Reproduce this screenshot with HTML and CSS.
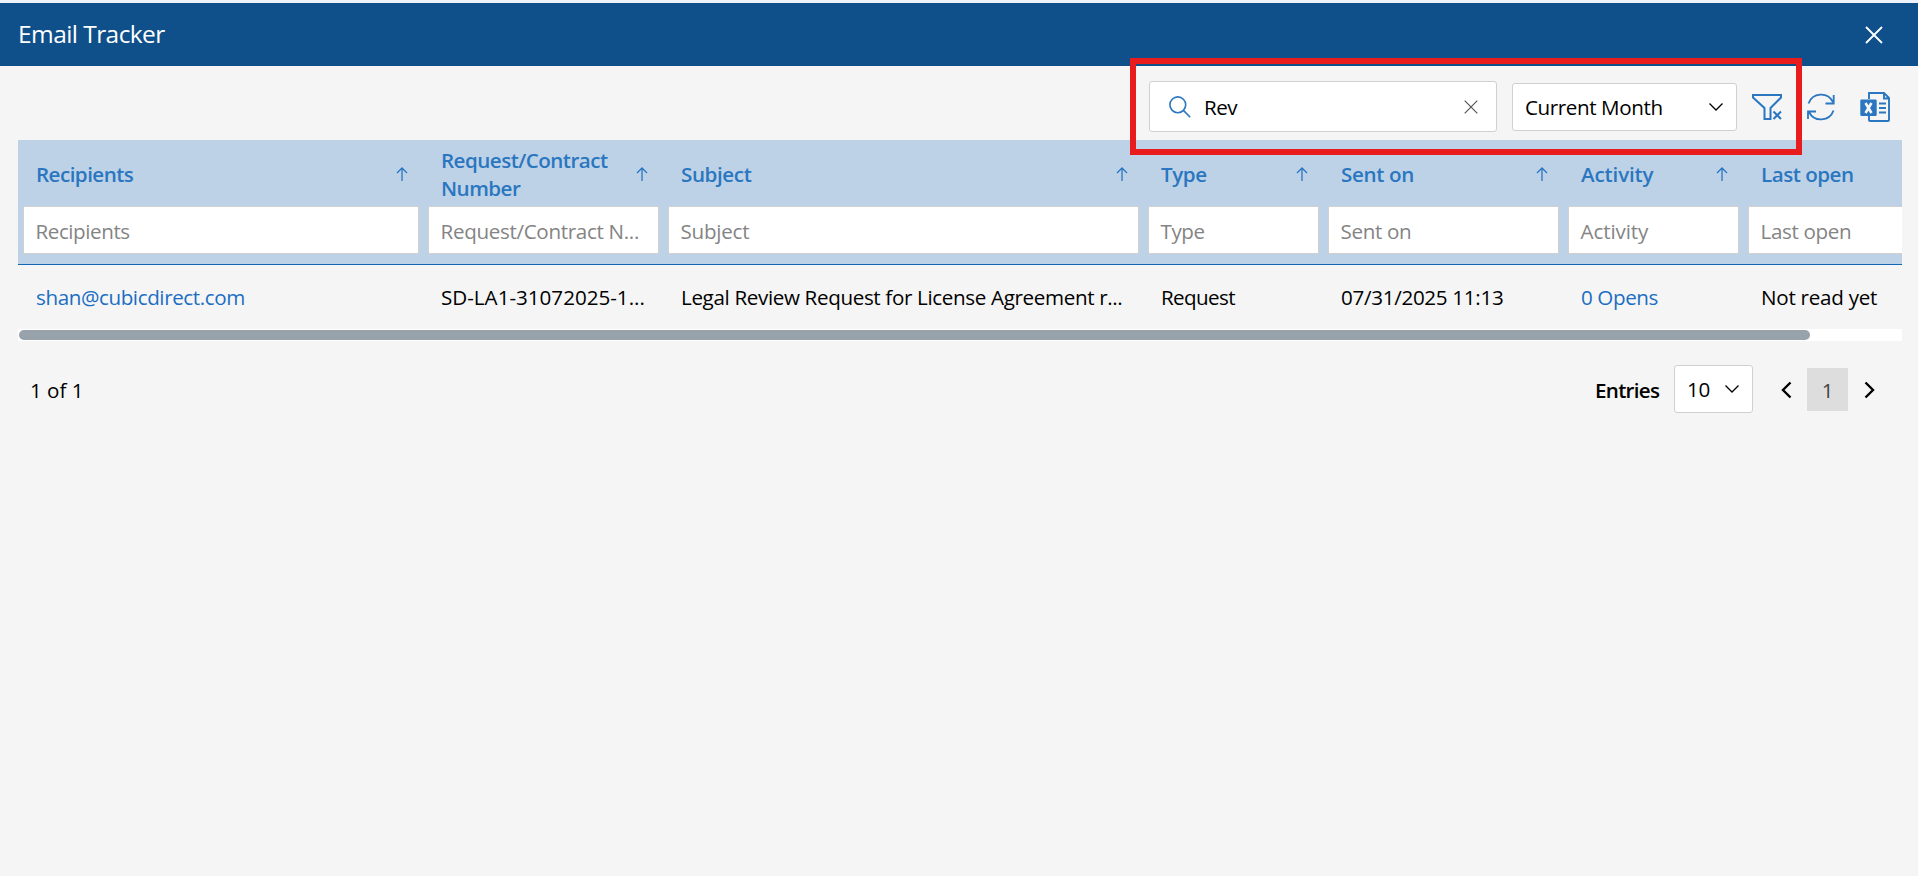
FILE: index.html
```html
<!DOCTYPE html>
<html lang="en">
<head>
<meta charset="utf-8">
<title>Email Tracker</title>
<link rel="stylesheet" href="styles.css">
</head>
<body>
<svg width="0" height="0" class="defs">
  <symbol id="arrow-up" viewBox="0 0 12 14"><path d="M6 14V1M1 6l5-5 5 5"/></symbol>
  <symbol id="chevron" viewBox="0 0 16 10"><path d="M1.500 1.500 8 8l6.500-6.500"/></symbol>
</svg>
<header class="titlebar">
  <h1 class="title">Email Tracker</h1>
  <svg class="close" viewBox="0 0 18 18"><path d="M1 1l16 16M17 1 1 17"/></svg>
</header>
<main class="panel">
  <div class="toolbar">
    <div class="search">
      <svg class="search-icon" viewBox="0 0 22 22"><circle cx="8.800" cy="8.800" r="7.900"/><path d="M14.400 14.400l6.800 6.800"/></svg>
      <span class="search-text">Rev</span>
      <svg class="clear" viewBox="0 0 14 14"><path d="M.7.7l12.600 12.600M13.300.7.7 13.300"/></svg>
    </div>
    <div class="period">
      <span class="period-text">Current Month</span>
      <svg class="chevron"><use href="#chevron"/></svg>
    </div>
    <svg class="tool filter" viewBox="0 0 30 28"><path d="M1 2h28v2.500L18.500 15v11h-6V15L1 4.500z"/><path d="M21.500 18.500l7.500 7.500M29 18.500 21.500 26"/></svg>
    <svg class="tool refresh" viewBox="0 0 28 28"><path d="M1.500 10.500A13.300 13.300 0 0 1 26 9M26.700 2v8.500H18.500M26.500 17.500A13.300 13.300 0 0 1 2 19M1 26v-7.500h8"/></svg>
    <svg class="tool excel" viewBox="0 0 30 30"><path d="M9 7V1h15l5 5v22q0 1-1 1H10q-1 0-1-1v-4M24 1v5.500h5M19 11.500h7M19 16h7M19 20.500h7"/><path class="solid" d="M1.500 7.500h14a1.200 1.200 0 0 1 1.200 1.200v14a1.200 1.200 0 0 1-1.200 1.200h-14a1.200 1.200 0 0 1-1.200-1.200v-14a1.200 1.200 0 0 1 1.200-1.200z"/><path class="mark" d="M5.500 11l6 10M11.500 11l-6 10"/></svg>
    <div class="highlight"></div>
  </div>

  <section class="grid">
    <div class="row head">
      <div class="th"><span class="h-recipients">Recipients</span><svg class="sort"><use href="#arrow-up"/></svg></div>
      <div class="th"><span class="h-number">Request/Contract<br>Number</span><svg class="sort"><use href="#arrow-up"/></svg></div>
      <div class="th"><span class="h-subject">Subject</span><svg class="sort"><use href="#arrow-up"/></svg></div>
      <div class="th"><span class="h-type">Type</span><svg class="sort"><use href="#arrow-up"/></svg></div>
      <div class="th"><span class="h-sent">Sent on</span><svg class="sort"><use href="#arrow-up"/></svg></div>
      <div class="th"><span class="h-activity">Activity</span><svg class="sort"><use href="#arrow-up"/></svg></div>
      <div class="th"><span class="h-last">Last open</span></div>
    </div>
    <div class="row filters">
      <div class="field"><span class="f-recipients">Recipients</span></div>
      <div class="field"><span class="f-number">Request/Contract N...</span></div>
      <div class="field"><span class="f-subject">Subject</span></div>
      <div class="field"><span class="f-type">Type</span></div>
      <div class="field"><span class="f-sent">Sent on</span></div>
      <div class="field"><span class="f-activity">Activity</span></div>
      <div class="field"><span class="f-last">Last open</span></div>
    </div>
    <div class="row record">
      <div class="td link"><span class="c-mail">shan@cubicdirect.com</span></div>
      <div class="td"><span class="c-number">SD-LA1-31072025-1...</span></div>
      <div class="td"><span class="c-subject">Legal Review Request for License Agreement r...</span></div>
      <div class="td"><span class="c-type">Request</span></div>
      <div class="td"><span class="c-sent">07/31/2025 11:13</span></div>
      <div class="td link"><span class="c-opens">0 Opens</span></div>
      <div class="td"><span class="c-last">Not read yet</span></div>
    </div>
    <div class="scrollbar"><div class="thumb"></div></div>
  </section>

  <footer class="pager">
    <span class="count">1 of 1</span>
    <span class="entries">Entries</span>
    <div class="size"><span class="size-text">10</span><svg class="chevron"><use href="#chevron"/></svg></div>
    <svg class="page-arrow" viewBox="0 0 11 18"><path d="M9.500 1.500 2 9l7.500 7.500"/></svg>
    <span class="page">1</span>
    <svg class="page-arrow" viewBox="0 0 11 18"><path d="M1.500 1.500 9 9l-7.500 7.500"/></svg>
  </footer>
</main>
</body>
</html>
```
FILE: styles.css
```css
* { box-sizing: border-box; }
body {
  margin: 0;
  height: 876px;
  overflow: hidden;
  background: #f5f5f5;
  color: #000;
  font: 20.600px/28px "Open Sans", "Noto Sans", sans-serif;
  letter-spacing: -.4px;
  white-space: nowrap;
}
.defs { position: absolute; }
svg { display: block; flex: none; fill: none; stroke: currentColor; }

.titlebar {
  height: 66px;
  padding: 0 35px 0 18px;
  border-top: 3px solid #eef2fa;
  background: #0f4f8a;
  color: #fff;
  display: flex;
  align-items: center;
  justify-content: space-between;
}
.title { margin: 0; padding-bottom: 2px; font-size: 24.500px; font-weight: 400; letter-spacing: -.57px; }
.close { width: 18px; height: 18px; stroke-width: 1.800; }

.panel { padding: 0 16px 0 18px; }

.toolbar {
  position: relative;
  height: 74px;
  padding: 15px 12px 0 0;
  display: flex;
  justify-content: flex-end;
  align-items: flex-start;
}
.search, .period, .size {
  background: #fff;
  border: 1px solid #d2d0ce;
  border-radius: 3px;
  display: flex;
  align-items: center;
}
.search { width: 348px; height: 51px; padding: 0 18px 0 19px; margin-right: 15px; }
.search-icon { width: 22px; height: 22px; color: #2a76c0; stroke-width: 1.600; margin-right: 13px; }
.search-text { flex: 1; letter-spacing: -.5px; }
.clear { width: 14px; height: 14px; color: #555; stroke-width: 1.200; }
.period { width: 225px; height: 48px; margin: 2px 15px 0 0; padding: 0 12px; justify-content: space-between; }
.chevron { width: 16px; height: 10px; stroke-width: 1.300; }
.tool { color: #2a76c0; }
.filter { width: 30px; height: 28px; margin: 12px 25px 0 0; stroke-width: 2; }
.refresh { width: 28px; height: 28px; margin: 12px 25px 0 0; stroke-width: 1.800; }
.excel { width: 30px; height: 30px; margin-top: 11px; stroke-width: 1.900; }
.solid { fill: currentColor; stroke: none; }
.mark { stroke: #f5f5f5; stroke-width: 2.600; }
.highlight {
  position: absolute;
  left: 1112px;
  top: -8px;
  width: 672px;
  height: 97px;
  border: 6px solid #e81c1c;
}

.grid { overflow: hidden; }
.row { display: grid; grid-template-columns: 405px 240px 480px 180px 240px 180px 240px; }
.head { height: 66px; background: #bdd2e6; color: #2a76c0; font-weight: 600; }
.th { padding: 2px 15.500px 0 18px; display: flex; align-items: center; justify-content: space-between; }
.sort { width: 12px; height: 14px; stroke-width: 1.300; }
.filters { height: 59px; padding-bottom: 10px; background: #bdd2e6; border-bottom: 1px solid #1267b4; }
.field {
  height: 48px;
  margin: 0 4px 0 5px;
  padding: 2px 11.500px 0;
  background: #fff;
  border: 1px solid #d2d0ce;
  color: #848484;
  display: flex;
  align-items: center;
}
.record { height: 64px; }
.td { padding: 0 0 1px 18px; display: flex; align-items: center; }
.link { color: #1b6ec2; }
.scrollbar { height: 12px; padding: 1px; background: #fff; }
.thumb { width: 1791px; height: 10px; border-radius: 5px; background: #98a2ab; }

.h-recipients, .h-number { letter-spacing: -.53px; }
.h-last { letter-spacing: -.5px; }
.h-sent { letter-spacing: -.35px; }
.h-activity { letter-spacing: -.15px; }
.f-recipients { letter-spacing: -.43px; }
.f-number { letter-spacing: -.32px; }
.f-subject { letter-spacing: -.25px; }
.f-activity { letter-spacing: -.1px; }
.f-sent, .f-last { letter-spacing: -.35px; }
.c-number, .count { letter-spacing: 0; }
.c-subject { letter-spacing: -.35px; }
.c-type { letter-spacing: -.6px; }
.c-sent { letter-spacing: -.3px; }
.c-last { letter-spacing: -.25px; }

.pager { height: 96px; padding: 0 27px 0 12px; display: flex; align-items: center; }
.count { flex: 1; padding-top: 2px; }
.entries { padding-top: 2px; width: 79px; letter-spacing: -.7px; font-weight: 600; }
.size { width: 79px; height: 48px; padding: 0 12px; margin-right: 28px; justify-content: space-between; }
.page-arrow { width: 11px; height: 18px; margin-top: 1px; stroke-width: 2.400; }
.page { width: 41px; height: 43px; margin: 0 16px 0 15px; background: #ddd; color: #444; text-align: center; line-height: 45px; }
```
